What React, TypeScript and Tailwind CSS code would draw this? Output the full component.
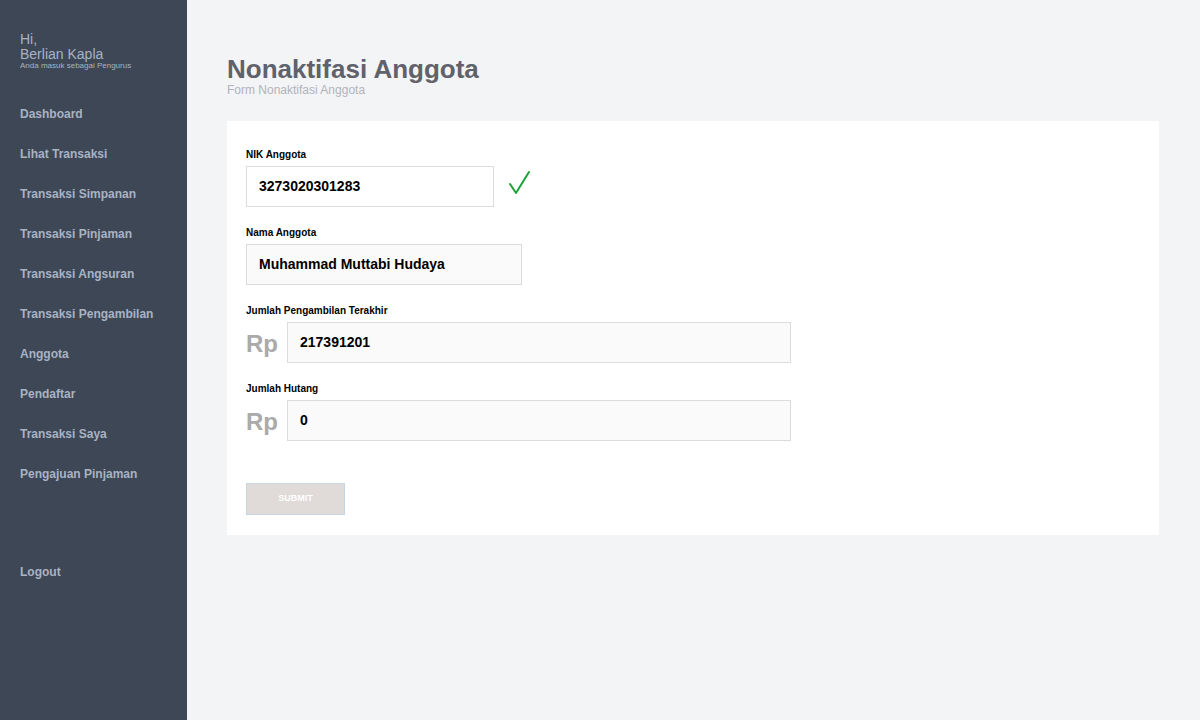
const menu = [
  'Dashboard',
  'Lihat Transaksi',
  'Transaksi Simpanan',
  'Transaksi Pinjaman',
  'Transaksi Angsuran',
  'Transaksi Pengambilan',
  'Anggota',
  'Pendaftar',
  'Transaksi Saya',
  'Pengajuan Pinjaman',
];

function Sidebar() {
  return (
    <aside className="w-[187px] shrink-0 bg-[#3d4756] text-[#a9b3c3] pl-5 pt-[32px]">
      <div className="leading-[15px]">
        <p className="text-[14px]">Hi,</p>
        <p className="text-[14px]">Berlian Kapla</p>
        <p className="text-[8px] leading-[9px] -mt-[1px]">Anda masuk sebagai Pengurus</p>
      </div>
      <nav className="mt-[37px] flex flex-col">
        {menu.map((m) => (
          <a key={m} href="#" className="h-[40px] text-[12px] font-bold leading-[15px]">
            {m}
          </a>
        ))}
        <a href="#" className="mt-[58px] text-[12px] font-bold leading-[15px]">
          Logout
        </a>
      </nav>
    </aside>
  );
}

function Field({ label, children }: { label: string; children: React.ReactNode }) {
  return (
    <div>
      <label className="block text-[10px] font-bold text-black leading-[12px] mb-[5px]">{label}</label>
      {children}
    </div>
  );
}

function RpInput({ value }: { value: string }) {
  return (
    <div className="flex items-center">
      <span className="w-[41px] text-[24px] font-bold text-[#aaaaaa] pt-[2px]">Rp</span>
      <div className="w-[504px] h-[41px] border border-[#dcdcdc] bg-[#fafafa] flex items-center px-3 text-[14px] font-bold text-black">
        {value}
      </div>
    </div>
  );
}

export default function App() {
  return (
    <div
      className="flex min-h-[720px] bg-[#f3f4f6]"
      style={{ fontFamily: '"Liberation Sans", Arial, sans-serif' }}
    >
      <Sidebar />
      <main className="flex-1 pl-10 pr-[41px] pt-[54px]">
        <h1 className="text-[26px] font-bold text-[#5f626b] leading-[30px]">Nonaktifasi Anggota</h1>
        <p className="text-[12px] text-[#b0b3bb] leading-[14px] -mt-[1px]">Form Nonaktifasi Anggota</p>

        <section className="mt-[24px] bg-white px-[19px] pt-[28px] pb-[20px] flex flex-col gap-[20px]">
          <Field label="NIK Anggota">
            <div className="flex items-center">
              <div className="w-[248px] h-[41px] border border-[#dcdcdc] bg-white flex items-center px-3 text-[14px] font-bold text-black">
                3273020301283
              </div>
              <svg width="24" height="26" viewBox="0 0 24 26" className="ml-[14px] -mt-[8px]">
                <path d="M2 14 L8 23 L21 2" fill="none" stroke="#1aa33a" strokeWidth="2" strokeLinecap="round" strokeLinejoin="round" />
              </svg>
            </div>
          </Field>
          <Field label="Nama Anggota">
            <div className="w-[276px] h-[41px] border border-[#dcdcdc] bg-[#fafafa] flex items-center px-3 text-[14px] font-bold text-black">
              Muhammad Muttabi Hudaya
            </div>
          </Field>
          <Field label="Jumlah Pengambilan Terakhir">
            <RpInput value="217391201" />
          </Field>
          <Field label="Jumlah Hutang">
            <RpInput value="0" />
          </Field>
          <div className="pt-[22px]">
            <button className="w-[99px] h-[32px] bg-[#e0dad9] border border-[#c5d5e4] text-white text-[9px] font-bold">
              SUBMIT
            </button>
          </div>
        </section>
      </main>
    </div>
  );
}
